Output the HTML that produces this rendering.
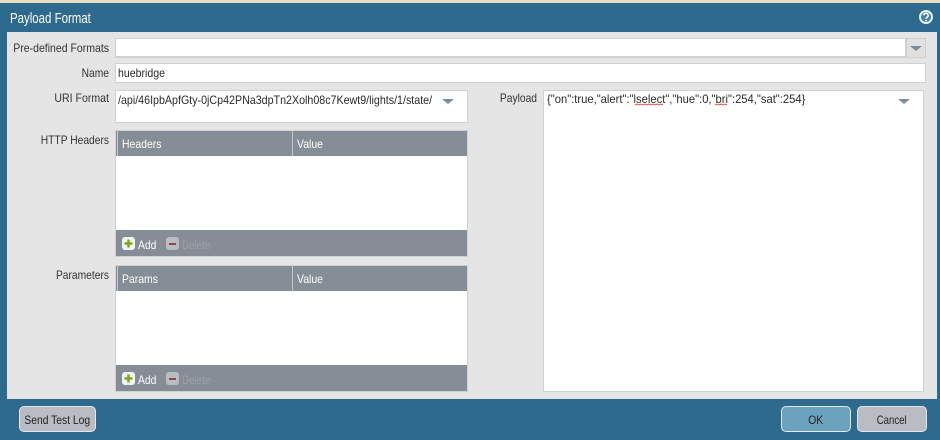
<!DOCTYPE html>
<html>
<head>
<meta charset="utf-8">
<style>
html,body{margin:0;padding:0}
body{width:940px;height:440px;overflow:hidden;position:relative;background:#2e6a8e;font-family:"Liberation Sans",sans-serif;font-size:12px;color:#2a2a2a}
div{position:absolute;box-sizing:border-box;white-space:nowrap}
#w{left:0;top:0;width:940px;height:440px;filter:blur(.3px)}
.lb{text-align:right;height:14px;line-height:14px;color:#333;transform:scaleX(.855);transform-origin:right}
.in{background:#fff;border:1px solid #cfd1d3}
.th{background:#858e96}
.hd{color:#fff;line-height:14px;height:14px;transform:scaleX(.87);transform-origin:left}
.ft{background:#858e96}
.tri{width:0;height:0;border-left:6px solid transparent;border-right:6px solid transparent;border-top:5px solid #7f8c98}
.ic{width:13px;height:13px;border-radius:3px;background:#f2f3f3}
.ic.d{background:#b9bdc1}
.add{color:#fff;line-height:14px;height:14px;transform:scaleX(.86);transform-origin:left}
.del{color:#9ba2a8;line-height:14px;height:14px;transform:scaleX(.82);transform-origin:left}
.btn{height:26px;border:1px solid #e4e8ea;border-radius:5px;text-align:center;line-height:26px;background:#b9bcc2;color:#222}
.btn span{display:inline-block;transform:scaleX(.86)}
</style>
</head>
<body>
<div id="w">
<div style="left:0;top:0;width:940px;height:3px;background:#e6dcc4"></div>
<div style="left:10px;top:11px;font-size:14.5px;line-height:17px;color:#fff;transform:scaleX(.79);transform-origin:left">Payload Format</div>
<svg style="position:absolute;left:918px;top:9px" width="16" height="16" viewBox="0 0 16 16"><circle cx="8" cy="8" r="6" fill="#3f7fb0" stroke="#e6f0f6" stroke-width="2"/><path d="M5.8 6.4a2.2 2.1 0 1 1 3.3 1.8c-.8.5-1.1.8-1.1 1.6" fill="none" stroke="#fff" stroke-width="1.5"/><rect x="7.2" y="10.8" width="1.6" height="1.6" fill="#fff"/></svg>

<div style="left:7px;top:32px;width:930px;height:367px;background:#e5e5e5"></div>

<div class="lb" style="left:-41px;top:41px;width:150px;transform:scaleX(.875)">Pre-defined Formats</div>
<div class="in" style="left:115px;top:38px;width:791px;height:20px;border-bottom:2px solid #cfd1d3"></div>
<div style="left:906px;top:38px;width:20px;height:20px;background:#e0e0e0;border:1px solid #d0d0d0"></div>
<div class="tri" style="left:910px;top:46px"></div>

<div class="lb" style="left:-41px;top:66px;width:150px">Name</div>
<div class="in" style="left:115px;top:63px;width:811px;height:20px"></div>
<div style="left:118px;top:66px;line-height:14px;transform:scaleX(.88);transform-origin:left">huebridge</div>

<div class="lb" style="left:-41px;top:91px;width:150px;transform:scaleX(.88)">URI Format</div>
<div class="in" style="left:115px;top:90px;width:353px;height:33px"></div>
<div style="left:118px;top:93px;line-height:14px;transform:scaleX(.89);transform-origin:left">/api/46IpbApfGty-0jCp42PNa3dpTn2Xolh08c7Kewt9/lights/1/state/</div>
<div class="tri" style="left:442px;top:99px"></div>

<div class="lb" style="left:-41px;top:133px;width:150px">HTTP Headers</div>
<div class="in" style="left:115px;top:130px;width:353px;height:127px"></div>
<div class="th" style="left:116px;top:131px;width:351px;height:25px"></div>
<div style="left:117px;top:131px;width:1px;height:25px;background:#c4c9cd"></div>
<div style="left:292px;top:131px;width:1px;height:25px;background:#c4c9cd"></div>
<div class="hd" style="left:122px;top:137px">Headers</div>
<div class="hd" style="left:297px;top:137px">Value</div>
<div class="ft" style="left:116px;top:230px;width:351px;height:26px"></div>
<div class="ic" style="left:122px;top:237px"></div>
<svg style="position:absolute;left:122px;top:237px" width="13" height="13"><path d="M6.5 2.5v8M2.5 6.5h8" stroke="#7ea51c" stroke-width="2.4"/></svg>
<div class="add" style="left:138px;top:238px">Add</div>
<div class="ic d" style="left:166px;top:237px"></div>
<div style="left:169px;top:243px;width:7px;height:2px;background:#8d4a3e"></div>
<div class="del" style="left:182px;top:238px">Delete</div>

<div class="lb" style="left:-41px;top:268px;width:150px">Parameters</div>
<div class="in" style="left:115px;top:265px;width:353px;height:127px"></div>
<div class="th" style="left:116px;top:266px;width:351px;height:25px"></div>
<div style="left:117px;top:266px;width:1px;height:25px;background:#c4c9cd"></div>
<div style="left:292px;top:266px;width:1px;height:25px;background:#c4c9cd"></div>
<div class="hd" style="left:122px;top:272px">Params</div>
<div class="hd" style="left:297px;top:272px">Value</div>
<div class="ft" style="left:116px;top:365px;width:351px;height:26px"></div>
<div class="ic" style="left:122px;top:372px"></div>
<svg style="position:absolute;left:122px;top:372px" width="13" height="13"><path d="M6.5 2.5v8M2.5 6.5h8" stroke="#7ea51c" stroke-width="2.4"/></svg>
<div class="add" style="left:138px;top:373px">Add</div>
<div class="ic d" style="left:166px;top:372px"></div>
<div style="left:169px;top:378px;width:7px;height:2px;background:#8d4a3e"></div>
<div class="del" style="left:182px;top:373px">Delete</div>

<div class="lb" style="left:387px;top:91px;width:150px">Payload</div>
<div class="in" style="left:543px;top:90px;width:381px;height:302px"></div>
<div style="left:547px;top:92px;line-height:14px;transform:scaleX(.934);transform-origin:left">{"on":true,"alert":"lselect","hue":0,"bri":254,"sat":254}</div>
<svg style="position:absolute;left:634px;top:103px" width="96" height="4"><path d="M1 2l2-1 2 1 2-1 2 1 2-1 2 1 2-1 2 1 2-1 2 1 2-1 2 1 2-1 2 1M81 2l2-1 2 1 2-1 2 1 2-1 2 1" fill="none" stroke="#e2504a" stroke-width="1"/></svg>
<div class="tri" style="left:898px;top:99px"></div>

<div class="btn" style="left:19px;top:406px;width:77px"><span style="margin-left:-1px">Send Test Log</span></div>
<div class="btn" style="left:781px;top:406px;width:70px;background:#6ba2bd"><span>OK</span></div>
<div class="btn" style="left:857px;top:406px;width:70px"><span style="transform:scaleX(.8)">Cancel</span></div>
</div>
</body>
</html>
